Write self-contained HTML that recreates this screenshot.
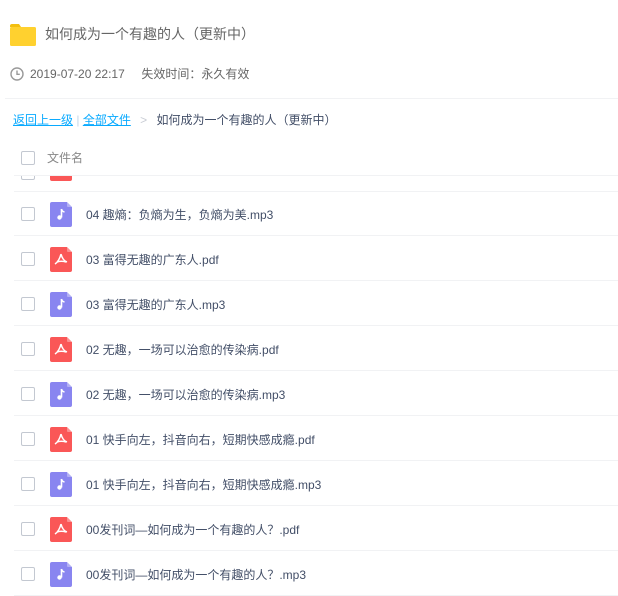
<!DOCTYPE html>
<html><head><meta charset="utf-8"><style>
*{margin:0;padding:0;box-sizing:border-box}
body{width:618px;height:586px;overflow:hidden;background:#fff;font-family:"Liberation Sans","Noto Sans CJK SC",sans-serif;position:relative;color:#424e67}
.abs{position:absolute}
.title{left:45px;top:24px;font-size:14px;color:#666;line-height:20px}
.date{left:30px;top:66px;font-size:12px;color:#666;line-height:16px}
.sep{left:5px;right:0;height:1px;background:#f1f2f4}
.bc{left:13px;top:112px;font-size:12px;line-height:16px;color:#424e67}
.bc a{color:#09aaff;text-decoration:underline}
.cb{width:14px;height:14px;border:1px solid #c3c8d1;border-radius:2px;background:#fff}
.row{left:0;right:0;height:45px}
.row .cb{position:absolute;left:21px;top:16px}
.row svg{position:absolute;left:50px;top:11px}
.row .n{position:absolute;left:86px;top:16px;font-size:12px;line-height:16px;color:#424e67}
.row .line{position:absolute;left:14px;right:0;bottom:0;height:1px;background:#f1f2f4}
</style></head><body>
<svg class="abs" style="left:10px;top:24px" width="26" height="22" viewBox="0 0 26 22"><path d="M0 2Q0 0 2 0H9L11 3H0Z" fill="#f3bf10"/><rect x="0" y="3" width="26" height="19" rx="1.5" fill="#ffd12f"/></svg>
<div class="abs title">如何成为一个有趣的人（更新中）</div>
<svg class="abs" style="left:10px;top:67px" width="14" height="14" viewBox="0 0 14 14"><circle cx="7" cy="7" r="6" fill="none" stroke="#999" stroke-width="1.4"/><path d="M7 3.5V7.3H9.8" fill="none" stroke="#999" stroke-width="1.4"/></svg>
<div class="abs date">2019-07-20 22:17&nbsp;&nbsp;&nbsp;&nbsp;&nbsp;失效时间：永久有效</div>
<div class="abs sep" style="top:98px"></div>
<div class="abs bc"><a>返回上一级</a><span style="color:#c3d6e8"> | </span><a>全部文件</a><span style="color:#c8ccd4;padding:0 6px"> &gt; </span>如何成为一个有趣的人（更新中）</div>
<div class="abs cb" style="left:21px;top:151px"></div>
<div class="abs" style="left:47px;top:150px;font-size:12px;color:#888;line-height:16px">文件名</div>
<div class="abs sep" style="left:14px;top:175px"></div>
<div class="abs" style="left:0;right:0;top:176px;height:16px;overflow:hidden">
<div class="cb" style="position:absolute;left:21px;top:-10px"></div>
<div style="position:absolute;left:50px;top:0;width:22px;height:5px;background:#fa5757;border-radius:0 0 2px 2px"></div>
<div style="position:absolute;left:14px;right:0;bottom:0;height:1px;background:#f1f2f4"></div>
</div>
<div id="list" class="abs" style="left:0;right:0;top:191px"></div>
<script>
var items=[["m","04 趣熵：负熵为生，负熵为美.mp3"],["p","03 富得无趣的广东人.pdf"],["m","03 富得无趣的广东人.mp3"],["p","02 无趣，一场可以治愈的传染病.pdf"],["m","02 无趣，一场可以治愈的传染病.mp3"],["p","01 快手向左，抖音向右，短期快感成瘾.pdf"],["m","01 快手向左，抖音向右，短期快感成瘾.mp3"],["p","00发刊词—如何成为一个有趣的人？.pdf"],["m","00发刊词—如何成为一个有趣的人？.mp3"]];
var h="";
items.forEach(function(it,i){
var col=it[0]=="p"?"#fa5757":"#8985f0";
var g=it[0]=="p"?'<path d="M11 7C10 11 8 15 5 17M11 7C12 11 14 14 17 15M7 15C10 14 13 14 16 15" fill="none" stroke="#fff" stroke-width="1.5"/>':'<path d="M11.5 7V15.5" stroke="#fff" stroke-width="1.6"/><circle cx="9.5" cy="15.5" r="2.2" fill="#fff"/><path d="M11.5 7Q12 9.5 14.5 10" fill="none" stroke="#fff" stroke-width="1.5"/>';
h+='<div class="abs row" style="top:'+(i*45)+'px"><div class="cb"></div><svg width="22" height="25" viewBox="0 0 22 25"><path d="M2 0H17L22 5V23Q22 25 20 25H2Q0 25 0 23V2Q0 0 2 0Z" fill="'+col+'"/><path d="M17 0L22 5H18Q17 5 17 4Z" fill="#fff" opacity=".35"/>'+g+'</svg><div class="n">'+it[1]+'</div><div class="line"></div></div>';
});
document.getElementById("list").innerHTML=h;
</script>
</body></html>
